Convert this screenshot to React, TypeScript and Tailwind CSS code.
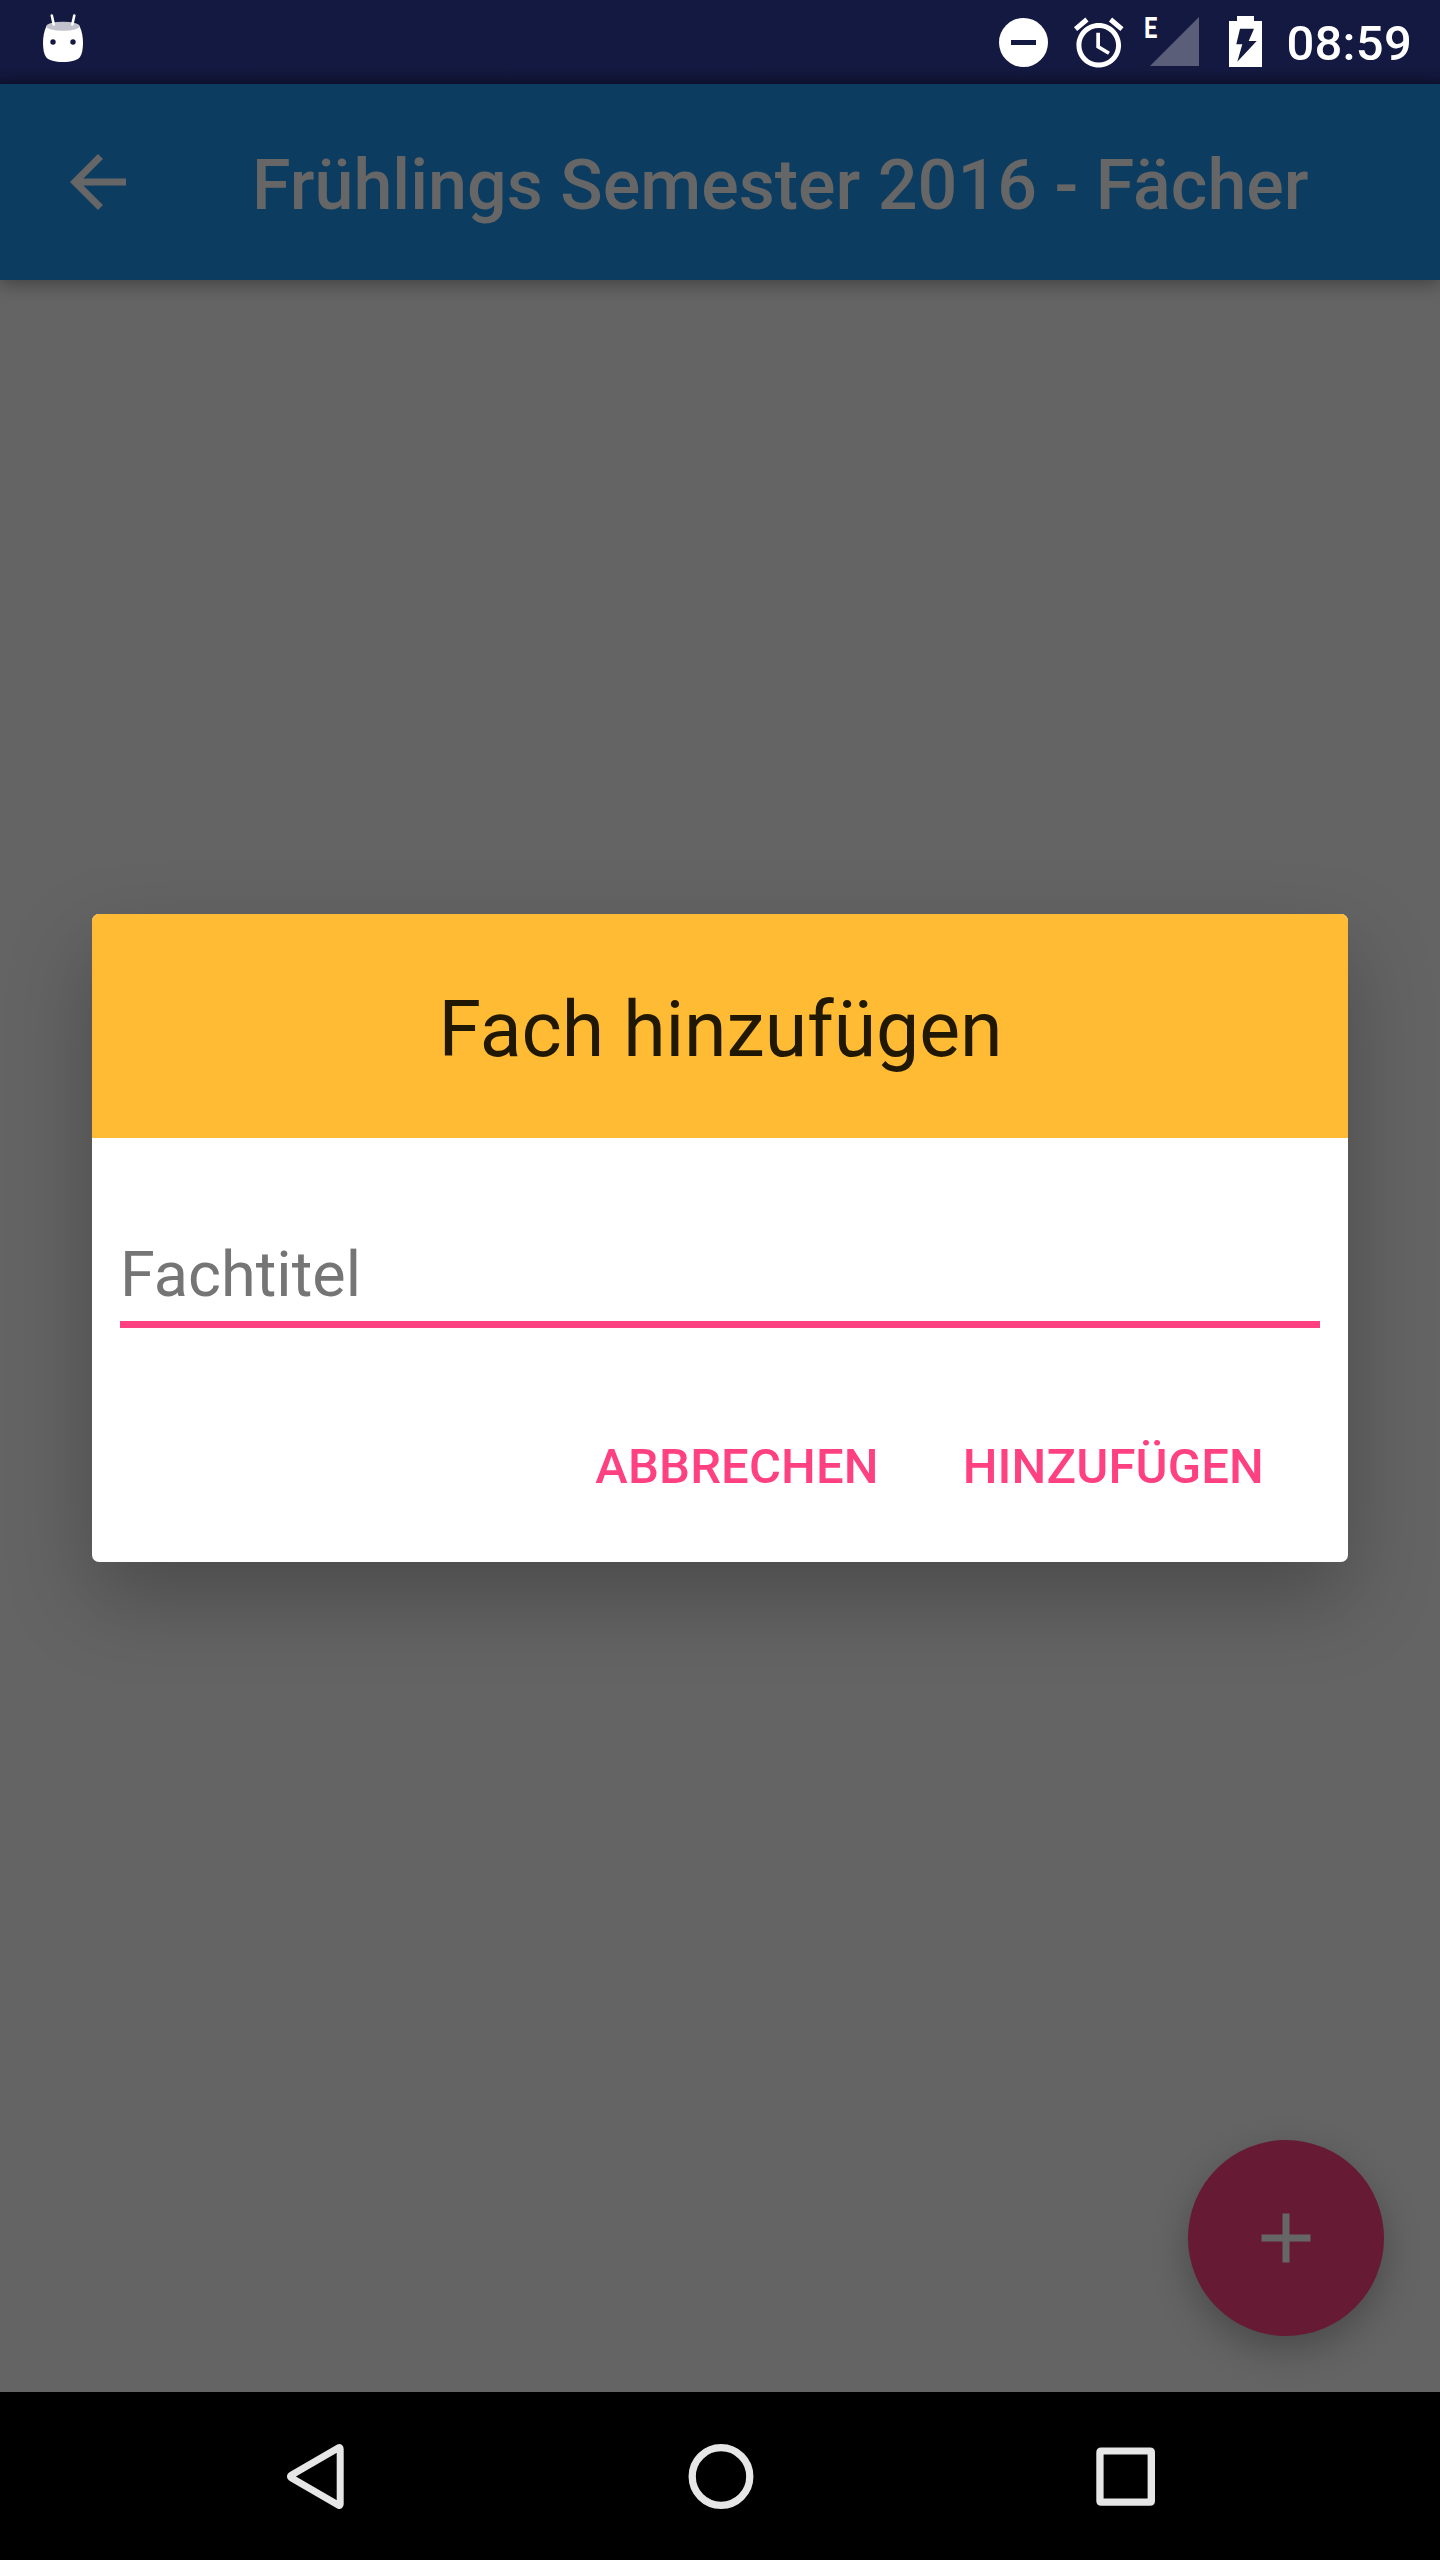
import React from "react";

function StatusBar() {
  return (
    <header className="flex h-[84px] shrink-0 items-start justify-between bg-[linear-gradient(to_bottom,#131940_0px,#131940_68px,#12173b_76px,#0f1330_84px)] pl-[42px] pr-[28px] text-white">
      <svg className="h-[84px] w-[42px]" viewBox="42 0 42 84" aria-label="Android">
        <path
          d="M46.5 26C44 31 43 37 43 43c0 6 1 11 3 14 2.500 3.500 9 5 17 5s14.500-1.500 17-5c2-3 3-8 3-14 0-6-1-12-3.500-17z"
          fill="#fff"
        />
        <ellipse cx="63" cy="26.300" rx="16.700" ry="4.500" fill="#c1c2cc" />
        <path d="M51.800 15.500l2 9M74.300 15.500l-2 9" stroke="#fff" strokeWidth="2.600" strokeLinecap="round" />
        <circle cx="53" cy="42" r="2.700" fill="#131940" />
        <circle cx="73" cy="42" r="2.700" fill="#131940" />
      </svg>
      <div className="flex items-start">
        <svg className="h-[84px] w-[49px]" viewBox="0 0 49 84" aria-label="Nicht stören">
          <circle cx="24.500" cy="42.500" r="24.500" fill="#fff" />
          <rect x="12" y="40" width="25" height="5" fill="#131940" />
        </svg>
        <svg className="ml-[20.500px] mt-[12.500px] size-[59.500px]" viewBox="0 0 24 24" fill="#fff" aria-label="Wecker">
          <path d="M22 5.720l-4.600-3.860-1.290 1.530 4.600 3.860L22 5.720zM7.880 3.390L6.600 1.860 2 5.710l1.290 1.530 4.590-3.850zM12.500 8H11v6l4.750 2.850.75-1.230-4-2.370V8zM12 4c-4.970 0-9 4.030-9 9s4.020 9 9 9c4.970 0 9-4.030 9-9s-4.030-9-9-9zm0 16c-3.870 0-7-3.130-7-7s3.130-7 7-7 7 3.130 7 7-3.130 7-7 7z" />
        </svg>
        <div className="relative ml-[22px] h-[84px] w-[49px]">
          <svg className="h-[84px] w-[49px]" viewBox="0 0 49 84" aria-label="Signal">
            <path d="M49 17v49H0z" fill="#5a5e79" />
          </svg>
          <span className="absolute -left-[6px] top-[11px] origin-left scale-x-[0.8] text-[29.500px] font-bold leading-[35px]">E</span>
        </div>
        <svg className="ml-[30px] h-[84px] w-[33px]" viewBox="1229 0 33 84" aria-label="Akku lädt">
          <path d="M1237 16h17v5h8v46h-33V21h8z" fill="#fff" />
          <path d="M1240 28.700h14l-5.300 12.300h8l-19.400 20.700 5-17.400h-6z" fill="#131940" />
        </svg>
        <time className="ml-[24px] mt-[15px] text-[49px] font-medium leading-[58px] tracking-[0.25px]">08:59</time>
      </div>
    </header>
  );
}

function AppBar() {
  return (
    <div className="z-10 flex h-[196px] shrink-0 items-center bg-[#0d3c61] pl-[56px] text-[#666666] shadow-[0_5px_16px_rgba(0,0,0,0.32)]">
      <svg className="size-[84px]" viewBox="0 0 24 24" fill="currentColor" aria-label="Zurück">
        <path d="M20 11H7.830l5.590-5.590L12 4l-8 8 8 8 1.410-1.410L7.830 13H20v-2z" />
      </svg>
      <h1 className="ml-[112px] whitespace-nowrap pt-[6px] text-[70px] font-medium leading-[82px] tracking-[0.025px]">
        Frühlings Semester 2016 - Fächer
      </h1>
    </div>
  );
}

function AddSubjectDialog() {
  return (
    <div className="absolute inset-0 z-20 flex items-start justify-center pt-[914px]">
      <div
        role="dialog"
        className="flex h-[648px] w-[1256px] flex-col rounded-[7px] bg-white shadow-[0_36px_84px_rgba(0,0,0,0.25)]"
      >
        <h2 className="flex h-[224px] items-center justify-center rounded-t-[7px] bg-[#ffbb33] pl-[1px] pt-[7px] text-[77px] leading-[90px] tracking-[-0.08px] text-[#211804]">
          Fach hinzufügen
        </h2>
        <div className="mx-[28px] mt-[90px] h-[100px] border-b-[7px] border-[#ff4081] text-[63px] leading-[93px] text-[#757575]">
          Fachtitel
        </div>
        <div className="mt-[106px] flex justify-end gap-[84px] pr-[84px] text-[49px] font-medium leading-[66px] tracking-[0.14px] text-[#ff4081]">
          <button>ABBRECHEN</button>
          <button>HINZUFÜGEN</button>
        </div>
      </div>
    </div>
  );
}

function NavigationBar() {
  return (
    <nav className="flex h-[168px] shrink-0 items-center justify-between bg-black pl-[285px] pr-[284px]">
      <svg className="h-[70px] w-[61px]" viewBox="285 2441 61 70" fill="none" stroke="#e6e6e6" strokeWidth="7" aria-label="Zurück">
        <path d="M338.600 2447.700Q340.200 2447 340.200 2449v55q0 2-1.600 1.300L292 2478.200q-3-1.700 0-3.400z" strokeLinejoin="round" />
      </svg>
      <svg className="h-[70px] w-[70px]" viewBox="685.500 2441 70 70" fill="none" stroke="#e6e6e6" strokeWidth="7.300" aria-label="Startseite">
        <circle cx="720.500" cy="2476.500" r="28.800" />
      </svg>
      <svg className="h-[70px] w-[61px]" viewBox="1095 2441 61 70" fill="#e6e6e6" fillRule="evenodd" aria-label="Übersicht">
        <path d="M1101.300 2447.500h48.700q5 0 5 5v48.200q0 5-5 5h-48.700q-5 0-5-5v-48.200q0-5 5-5zM1103.600 2454.500v44h44v-44z" />
      </svg>
    </nav>
  );
}

export default function App() {
  return (
    <div className="relative flex h-[2560px] w-[1440px] flex-col overflow-hidden bg-[#646464] font-['Roboto',sans-serif]">
      <StatusBar />
      <AppBar />
      <main className="relative flex-1">
        <button
          aria-label="Fach hinzufügen"
          className="absolute bottom-[56px] right-[56px] flex size-[196px] items-center justify-center rounded-full bg-[#661a34] shadow-[0_14px_36px_rgba(0,0,0,0.26)]"
        >
          <svg className="size-[84px]" viewBox="0 0 24 24" fill="#666666">
            <path d="M19 13h-6v6h-2v-6H5v-2h6V5h2v6h6v2z" />
          </svg>
        </button>
      </main>
      <NavigationBar />
      <AddSubjectDialog />
    </div>
  );
}
